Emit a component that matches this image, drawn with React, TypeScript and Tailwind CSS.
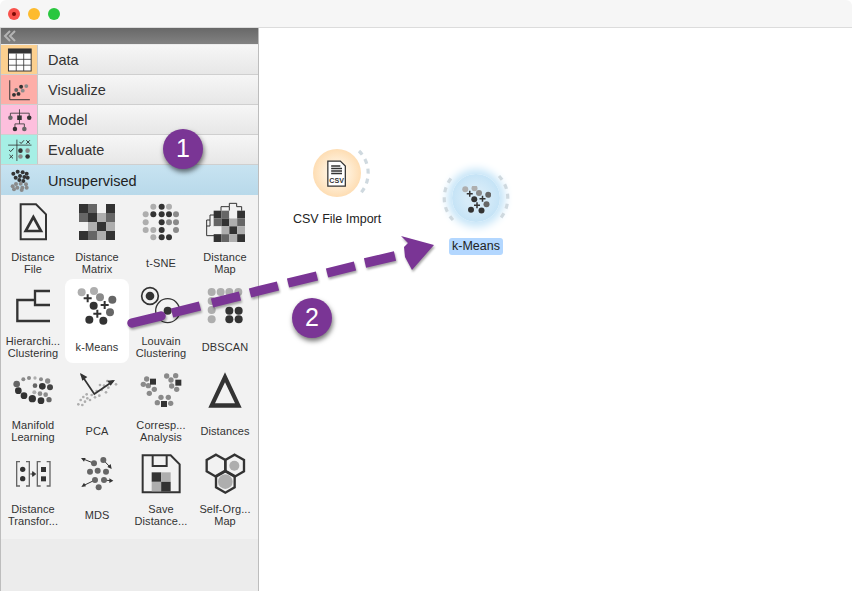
import React from "react";

type Dot = [number, number, string, number?];

function Dots({ items, r = 12 }: { items: Dot[]; r?: number }) {
	return (
		<>
			{items.map(([x, y, fill, size], i) => (
				<circle key={i} cx={x} cy={y} r={size ?? r} fill={fill} />
			))}
		</>
	);
}

function Plus({ x, y, s = 12 }: { x: number; y: number; s?: number }) {
	return (
		<path
			d={`M${x - s} ${y}H${x + s}M${x} ${y - s}V${y + s}`}
			stroke="#333"
			strokeWidth={6}
			fill="none"
		/>
	);
}

function Cells({ x, y, size, rows }: { x: number; y: number; size: number; rows: string[][] }) {
	return (
		<>
			{rows.map((row, r) =>
				row.map((fill, c) => (
					<rect key={`${r}-${c}`} x={x + c * size} y={y + r * size} width={size} height={size} fill={fill} />
				)),
			)}
		</>
	);
}

const D = "#333333";
const M = "#666666";
const G = "#8a8a8a";
const L = "#aeaeae";
const B = "#f2f2f2";

const kMeansDots: Dot[] = [
	[245, 292, L], [282, 288, L], [300, 307, G], [337, 314, M],
	[281, 332, D], [330, 352, M], [268, 374, D], [310, 377, D],
];

const DistanceFile = () => (
	<svg width={48} height={48} viewBox="27 9 144 144">
		<path d="M62 28H108L138 58V133H62Z" fill="none" stroke={D} strokeWidth={6} />
		<path d="M100 66L123 108H77Z" fill="none" stroke={D} strokeWidth={8} />
	</svg>
);

const DistanceMatrix = () => (
	<svg width={48} height={48} viewBox="219 9 144 144">
		<Cells x={237} y={27} size={27} rows={[[D, M, B, D], [M, D, L, M], [B, L, D, L], [D, M, L, D]]} />
	</svg>
);

const TSne = () => (
	<svg width={48} height={48} viewBox="411 9 144 144">
		<Dots
			r={9}
			items={[
				[460, 35, L], [485, 35, D], [507, 35, L],
				[437, 58, L], [460, 58, D], [485, 58, D], [507, 58, D], [528, 58, G],
				[437, 82, L], [485, 82, D], [507, 82, G], [528, 82, G],
				[437, 105, L], [460, 105, L], [485, 105, D], [528, 105, G],
				[460, 127, L], [485, 127, D], [507, 127, D],
			]}
		/>
	</svg>
);

const DistanceMap = () => (
	<svg width={48} height={48} viewBox="603 9 144 144">
		<path
			d="M663 47V35H688V47M688 35V25H710V35H725V47M642 60H630V93H620V75H630M620 93V122H642"
			fill="none"
			stroke={D}
			strokeWidth={3}
		/>
		<Cells x={641} y={47} size={23.5} rows={[[D, M, B, D], [M, D, L, M], [B, L, D, L], [D, M, L, D]]} />
	</svg>
);

const Hierarchical = () => (
	<svg width={48} height={48} viewBox="27 261 144 144">
		<path d="M150 288H105V330H150M105 315H52V378H150" fill="none" stroke={D} strokeWidth={7} />
	</svg>
);

const KMeans = () => (
	<svg width={48} height={48} viewBox="219 261 144 144">
		<Dots items={kMeansDots} />
		<Plus x={263} y={310} />
		<Plus x={314} y={330} />
		<Plus x={292} y={356} />
	</svg>
);

const Louvain = () => (
	<svg width={48} height={48} viewBox="411 261 144 144">
		<circle cx={450} cy={303} r={25} fill="none" stroke={D} strokeWidth={5} />
		<circle cx={450} cy={303} r={13} fill={D} />
		<circle cx={503} cy={347} r={36} fill="none" stroke={D} strokeWidth={4} />
		<circle cx={503} cy={347} r={12} fill={D} />
	</svg>
);

const Dbscan = () => (
	<svg width={48} height={48} viewBox="603 261 144 144">
		<Dots
			items={[
				[635, 291, L], [662, 291, L], [688, 291, L], [715, 291, L],
				[635, 318, L], [635, 345, L], [635, 373, L],
				[688, 347, D], [716, 347, D], [688, 373, D], [716, 373, D],
			]}
		/>
	</svg>
);

const Manifold = () => (
	<svg width={48} height={48} viewBox="27 3 144 144">
		<Dots
			items={[
				[50, 57, M, 10], [70, 43, G, 6], [87, 39, G, 6], [105, 39, L, 5], [123, 43, G, 6], [143, 48, G, 8],
				[105, 62, M, 7], [127, 64, D, 10], [150, 67, "#444", 9], [55, 77, D, 10], [72, 92, D, 10],
				[97, 101, D, 11], [123, 107, D, 10], [147, 104, M, 8], [120, 86, G, 7], [137, 89, G, 7], [103, 82, L, 6],
			]}
		/>
	</svg>
);

const Pca = () => (
	<svg width={48} height={48} viewBox="219 3 144 144">
		<Dots
			r={4}
			items={[
				[235, 118, L], [247, 120, L], [242, 105, L], [255, 110, L], [262, 100, L], [270, 105, L],
				[250, 96, L], [275, 90, L], [285, 97, L], [298, 92, L], [290, 78, L], [305, 75, L],
				[318, 82, L], [312, 62, L], [325, 68, L], [335, 50, L], [348, 58, L], [322, 48, L], [300, 60, L], [260, 88, L],
			]}
		/>
		<path d="M243 28L283 87L340 48" fill="none" stroke={D} strokeWidth={5} />
		<path d="M240 24L262 36L247 47Z M345 45L322 47L332 62Z" fill={D} />
	</svg>
);

const Corresp = () => (
	<svg width={48} height={48} viewBox="411 3 144 144">
		<Dots
			r={8}
			items={[
				[440, 42, G], [430, 58, G], [445, 62, G], [463, 73, G], [448, 85, G],
				[500, 33, G], [527, 32, G], [513, 45, G], [515, 63, G], [530, 73, G],
				[483, 97, G], [505, 97, G], [472, 113, G], [512, 115, G],
			]}
		/>
		<rect x={450} y={41} width={18} height={18} fill={D} />
		<rect x={526} y={44} width={18} height={18} fill={D} />
		<rect x={483} y={108} width={18} height={18} fill={D} />
	</svg>
);

const Distances = () => (
	<svg width={48} height={48} viewBox="603 3 144 144">
		<path d="M675 22L725 128H625Z M675 52L645 115H705Z" fill={D} fillRule="evenodd" />
	</svg>
);

const Transformer = () => (
	<svg width={48} height={48} viewBox="27 255 144 144">
		<path d="M60 290H50V363H60M78 290H88V363H78M122 290H112V363H122M140 290H150V363H140" fill="none" stroke={M} strokeWidth={4} />
		<circle cx={68} cy={313} r={8} fill={D} />
		<circle cx={68} cy={341} r={8} fill={D} />
		<path d="M91 327H100M98 320L107 327L98 334Z" fill={D} stroke={D} strokeWidth={3} />
		<rect x={123} y={306} width={15} height={15} fill={D} />
		<rect x={123} y={334} width={15} height={15} fill={D} />
	</svg>
);

const Mds = () => (
	<svg width={48} height={48} viewBox="219 255 144 144">
		<path d="M282 295L250 282M310 285L330 306M285 345L250 362M312 345L332 347" stroke={D} strokeWidth={3} fill="none" />
		<path d="M243 279L257 279L252 290Z M335 312L322 306L332 297Z M244 366L252 353L258 364Z M340 347L328 340L328 354Z" fill={D} />
		<Dots
			r={9}
			items={[
				[282, 295, M], [310, 285, M], [270, 320, M], [293, 317, M],
				[318, 320, M], [285, 345, M], [312, 345, M], [296, 367, M],
			]}
		/>
	</svg>
);

const SaveDistance = () => (
	<svg width={48} height={48} viewBox="411 255 144 144">
		<path d="M428 271H512L539 298V382H428Z M458 271V303H500V271" fill="none" stroke={D} strokeWidth={6} />
		<Cells x={455} y={322} size={28.5} rows={[[D, L], [L, D]]} />
	</svg>
);

function Hex({ x, y }: { x: number; y: number }) {
	return (
		<path
			d={`M${x} ${y - 33}L${x + 28} ${y - 17}V${y + 17}L${x} ${y + 33}L${x - 28} ${y + 17}V${y - 17}Z`}
			fill="none"
			stroke={D}
			strokeWidth={7}
		/>
	);
}

const SelfOrg = () => (
	<svg width={48} height={48} viewBox="603 255 144 144">
		<circle cx={703} cy={302} r={15} fill={L} />
		<circle cx={676} cy={350} r={22} fill={L} />
		<Hex x={648} y={302} />
		<Hex x={704} y={302} />
		<Hex x={676} y={350} />
	</svg>
);

const widgets: { lines: string[]; icon: React.ReactNode; active?: boolean }[] = [
	{ lines: ["Distance", "File"], icon: <DistanceFile /> },
	{ lines: ["Distance", "Matrix"], icon: <DistanceMatrix /> },
	{ lines: ["t-SNE"], icon: <TSne /> },
	{ lines: ["Distance", "Map"], icon: <DistanceMap /> },
	{ lines: ["Hierarchi...", "Clustering"], icon: <Hierarchical /> },
	{ lines: ["k-Means"], icon: <KMeans />, active: true },
	{ lines: ["Louvain", "Clustering"], icon: <Louvain /> },
	{ lines: ["DBSCAN"], icon: <Dbscan /> },
	{ lines: ["Manifold", "Learning"], icon: <Manifold /> },
	{ lines: ["PCA"], icon: <Pca /> },
	{ lines: ["Corresp...", "Analysis"], icon: <Corresp /> },
	{ lines: ["Distances"], icon: <Distances /> },
	{ lines: ["Distance", "Transfor..."], icon: <Transformer /> },
	{ lines: ["MDS"], icon: <Mds /> },
	{ lines: ["Save", "Distance..."], icon: <SaveDistance /> },
	{ lines: ["Self-Org...", "Map"], icon: <SelfOrg /> },
];

const DataIcon = () => (
	<svg width={37} height={29} viewBox="3 135 111 87">
		<rect x={26} y={146} width={70} height={68} fill="#fff" stroke={D} strokeWidth={3} />
		<rect x={26} y={146} width={70} height={14} fill={D} />
		<path d="M50 160V214M73 160V214M26 178H96M26 196H96" stroke={D} strokeWidth={2.5} fill="none" />
	</svg>
);

const VisualizeIcon = () => (
	<svg width={37} height={29} viewBox="3 225 111 87">
		<path d="M30 240V300H92" fill="none" stroke={D} strokeWidth={3} />
		<Dots
			r={6}
			items={[
				[43, 285, D], [57, 282, D], [50, 270, M], [65, 260, D], [81, 258, G], [70, 272, G],
			]}
		/>
	</svg>
);

const ModelIcon = () => (
	<svg width={37} height={29} viewBox="3 315 111 87">
		<path d="M60 327V353M32 353V339H90V353M60 353V372M46 388V372H75V388" fill="none" stroke={D} strokeWidth={2.5} />
		<circle cx={32} cy={353} r={7} fill={M} />
		<rect x={53} y={346} width={14} height={14} fill={D} />
		<circle cx={90} cy={353} r={7} fill={D} />
		<circle cx={46} cy={388} r={7} fill={D} />
		<circle cx={75} cy={388} r={7} fill={M} />
	</svg>
);

const EvaluateIcon = () => (
	<svg width={37} height={29} viewBox="3 405 111 87">
		<path d="M52 418V484M25 435H97" fill="none" stroke={D} strokeWidth={2.5} />
		<path
			d="M60 425L65 430L74 420M81 420L92 431M92 420L81 431M28 450L33 455L42 445M29 465L40 476M40 465L29 476"
			fill="none"
			stroke={D}
			strokeWidth={3}
		/>
		<Dots
			r={7}
			items={[
				[63, 452, D], [85, 452, G], [63, 470, G], [85, 470, D],
			]}
		/>
	</svg>
);

const UnsupervisedIcon = () => (
	<svg width={37} height={29} viewBox="3 495 111 87">
		<Dots
			r={6}
			items={[
				[40, 518, D], [53, 512, D], [68, 514, D], [80, 518, D], [47, 530, D],
				[60, 525, D], [73, 528, D], [83, 530, D], [58, 537, D], [70, 540, D],
				[48, 549, G], [62, 548, G], [78, 550, G], [38, 556, G], [52, 560, G],
				[67, 560, G], [80, 560, G], [42, 565, G], [65, 567, G],
			]}
		/>
	</svg>
);

const categories = [
	{ name: "Data", tone: "bg-[#fcd08f]", icon: <DataIcon /> },
	{ name: "Visualize", tone: "bg-[#fdaea8]", icon: <VisualizeIcon /> },
	{ name: "Model", tone: "bg-[#fdbfdd]", icon: <ModelIcon /> },
	{ name: "Evaluate", tone: "bg-[#a6efe5]", icon: <EvaluateIcon /> },
];

function Category({ name, tone, icon }: { name: string; tone: string; icon: React.ReactNode }) {
	return (
		<div className="flex h-[30px] items-stretch border-b border-[#cfcfcf] bg-gradient-to-b from-[#f6f6f6] to-[#e7e7e7]">
			<div className={`flex w-[37px] items-center justify-center border-r border-[#c9c9c9] ${tone}`}>{icon}</div>
			<span className="ml-[10px] self-center pt-[3px] text-[14.5px] text-[#333]">{name}</span>
		</div>
	);
}

function Widget({ lines, icon, active }: { lines: string[]; icon: React.ReactNode; active?: boolean }) {
	return (
		<div className={`flex h-[84px] flex-col items-center rounded-lg pt-[3px] ${active ? "bg-white" : ""}`}>
			{icon}
			<div className="flex h-[33px] flex-col items-center justify-center text-[11px] leading-[12px] tracking-[0.1px] text-[#333]">
				{lines.map((line) => (
					<span key={line}>{line}</span>
				))}
			</div>
		</div>
	);
}

function Badge({ label, className }: { label: string; className: string }) {
	return (
		<div
			className={`absolute flex size-10 items-center justify-center rounded-full bg-[#7a3595] text-[25px] font-medium text-white shadow-[1px_3px_5px_rgba(0,0,0,0.55)] ${className}`}
		>
			{label}
		</div>
	);
}

const Arrow = () => (
	<svg className="absolute left-0 top-0 drop-shadow-[1px_2px_1px_rgba(0,0,0,0.35)]" width={852} height={591}>
		<path d="M132 323L161 316" fill="none" stroke="#7a3595" strokeWidth={9.5} strokeLinecap="round" />
		<path
			d="M172 313L200 306M212 303L240 296M250 293L278 286M288 283L317 276M327 273L355 266M365 263L395 256"
			fill="none"
			stroke="#7a3595"
			strokeWidth={9.5}
		/>
		<polygon points="401,236 434,245 412,270 405,257 404,247 408,243" fill="#7a3595" />
	</svg>
);

function Node({
	className,
	tone,
	dashes,
	children,
}: {
	className: string;
	tone: string;
	dashes: string;
	children: React.ReactNode;
}) {
	return (
		<div className={`absolute size-[72px] ${className}`}>
			<div className={`absolute left-3 top-3 flex size-12 items-center justify-center rounded-full ${tone}`}>{children}</div>
			<svg className="absolute inset-0" width={72} height={72}>
				<path d={dashes} fill="none" stroke="#cfd9df" strokeWidth={3.2} strokeDasharray="5 5" />
			</svg>
		</div>
	);
}

export default function App() {
	return (
		<div className="relative flex h-[591px] w-[852px] flex-col overflow-hidden bg-white font-['Liberation_Sans',Arial,sans-serif]">
			<header className="flex h-[28px] shrink-0 items-center gap-2 rounded-t-md border-b border-[#dcdcdc] bg-[#f6f6f6] pl-2">
				<span className="flex size-3 items-center justify-center rounded-full bg-[#f9524c]">
					<span className="size-1 rounded-full bg-[#7d0a05]" />
				</span>
				<span className="size-3 rounded-full bg-[#fdbb2e]" />
				<span className="size-3 rounded-full bg-[#29c73f]" />
			</header>
			<div className="flex min-h-0 flex-1">
				<aside className="flex w-[259px] shrink-0 flex-col border-x border-[#bdbdbd] bg-[#ececec]">
					<div className="flex h-[16px] shrink-0 items-center bg-gradient-to-b from-[#686868] to-[#828282] pl-[2px]">
						<svg width={14} height={12} viewBox="0 0 14 12">
							<path d="M7 1L2 6L7 11M12 1L7 6L12 11" fill="none" stroke="#b4b4b4" strokeWidth={2} />
						</svg>
					</div>
					<div className="mt-px">
						{categories.map((c) => (
							<Category key={c.name} {...c} />
						))}
						<div className="flex h-[30px] items-stretch bg-gradient-to-b from-[#c7e3f1] to-[#b8d9ea]">
							<div className="flex w-[37px] items-center justify-center">
								<UnsupervisedIcon />
							</div>
							<span className="ml-[10px] self-center pt-[3px] text-[14.5px] text-[#222]">Unsupervised</span>
						</div>
					</div>
					<div className="grid grid-cols-[64px_64px_64px_64px] bg-[#f2f2f2] pb-2">
						{widgets.map((w) => (
							<Widget key={w.lines.join(" ")} {...w} />
						))}
					</div>
				</aside>
				<main className="relative flex-1">
					<Node
						className="left-[42px] top-[109px]"
						tone="bg-[radial-gradient(circle,#fff1dc_30%,#fdcf96_100%)]"
						dashes="M58 14A31 31 0 0 1 58 58"
					>
						<svg width={20} height={27} viewBox="2 0 24 32">
							<path d="M3 1H18L24 7V31H3Z" fill="#fff" stroke={D} strokeWidth={1.5} />
							<path d="M7 7H18M7 10H20M7 13H20M7 16H20" stroke={D} strokeWidth={1.6} fill="none" />
							<text x={13.5} y={27} textAnchor="middle" fontSize={8.5} fontWeight={700} fill={D}>
								CSV
							</text>
						</svg>
					</Node>
					<Node
						className="left-[181px] top-[134px]"
						tone="bg-[radial-gradient(circle,#d6ebf8_30%,#b9def5_100%)] pt-[5px] shadow-[0_0_8px_5px_#c6e5f8]"
						dashes="M59 14A32 32 0 0 1 59 58M13 58A32 32 0 0 1 13 14"
					>
						<svg width={29} height={29} viewBox="232 279 116 116">
							<Dots items={kMeansDots} />
							<Plus x={263} y={310} />
							<Plus x={314} y={330} />
							<Plus x={292} y={356} />
						</svg>
					</Node>
					<span className="absolute left-[34px] top-[184px] text-[12.5px] leading-[15px] text-[#222]">CSV File Import</span>
					<span className="absolute left-[190px] top-[210px] rounded-[3px] bg-[#b3d7ff] px-[3px] py-px text-[12.5px] leading-[15px] text-[#222]">
						k-Means
					</span>
				</main>
			</div>
			<Arrow />
			<Badge label="1" className="left-[163px] top-[129px]" />
			<Badge label="2" className="left-[292px] top-[298px]" />
		</div>
	);
}
